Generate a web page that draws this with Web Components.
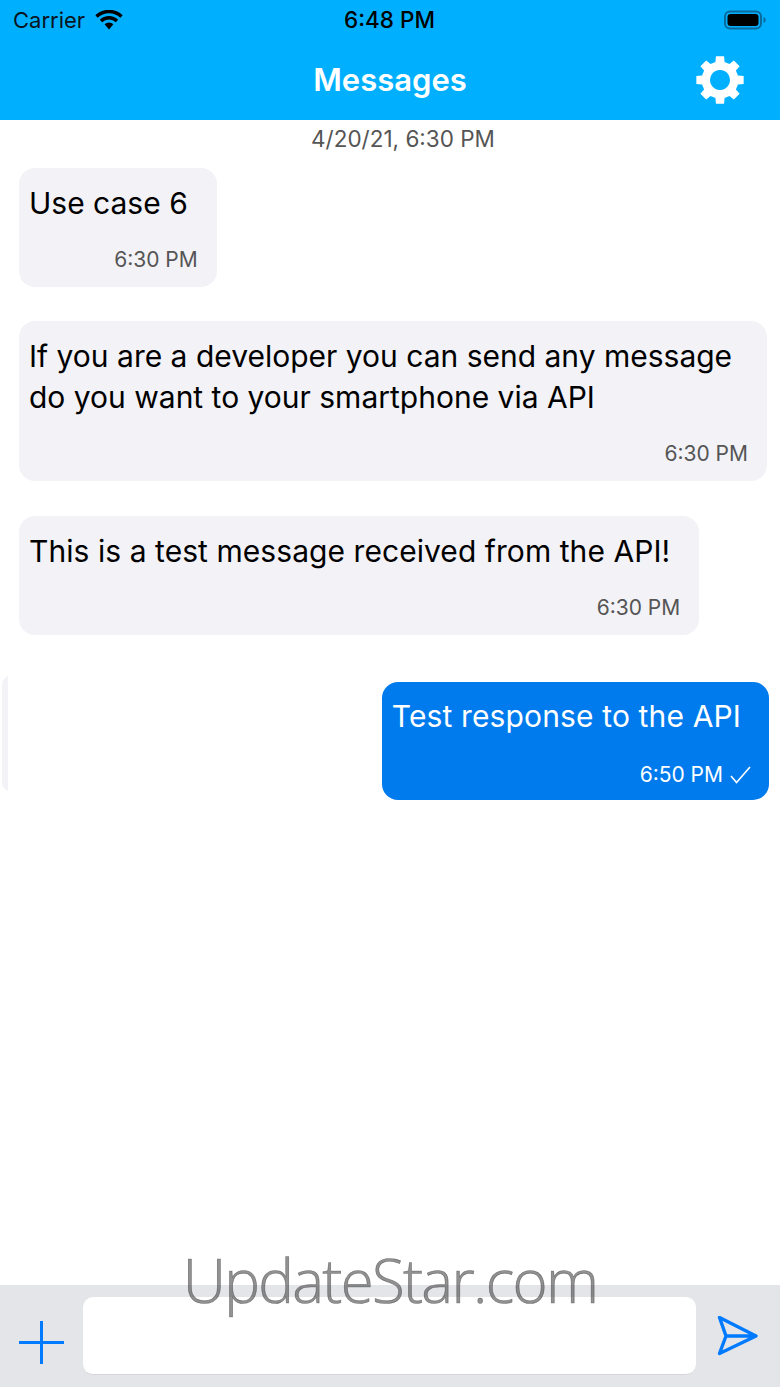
<!DOCTYPE html>
<html>
<head>
<meta charset="utf-8">
<style>
  html, body { margin: 0; padding: 0; }
  body { width: 780px; height: 1387px; overflow: hidden; background: #fff; font-family: Inter, "Liberation Sans", sans-serif; }
</style>
</head>
<body>
<chat-screen>
  <status-bar slot="top"></status-bar>
  <nav-bar slot="top" title="Messages"></nav-bar>
  <date-label>4/20/21, 6:30 PM</date-label>
  <chat-bubble time="6:30 PM" style="margin-top:13px">Use case 6</chat-bubble>
  <chat-bubble time="6:30 PM" style="margin-top:34px">If you are a developer you can send any message do you want to your smartphone via API</chat-bubble>
  <chat-bubble time="6:30 PM" style="margin-top:35px;letter-spacing:.06px">This is a test message received from the API!</chat-bubble>
  <chat-bubble time="6:50 PM" mine style="margin-top:47px;letter-spacing:.14px">Test response to the API</chat-bubble>
  <compose-bar slot="bottom"></compose-bar>
</chat-screen>
<water-mark>UpdateStar.com</water-mark>

<script>
class ChatScreen extends HTMLElement {
  constructor() {
    super();
    this.attachShadow({ mode: 'open' }).innerHTML = `
      <style>
        :host { display: flex; flex-direction: column; width: 780px; height: 1387px; }
        main { flex: 1; position: relative; display: flex; flex-direction: column; align-items: flex-start; min-height: 0; }
        .sliver { position: absolute; left: 2px; top: 555px; width: 10px; height: 117px; background: #f2f2f7; border-radius: 10px 0 0 10px; box-shadow: inset -4px 0 0 #fff; }
      </style>
      <slot name="top"></slot>
      <main><div class="sliver"></div><slot></slot></main>
      <slot name="bottom"></slot>`;
  }
}

class StatusBar extends HTMLElement {
  constructor() {
    super();
    this.attachShadow({ mode: 'open' }).innerHTML = `
      <style>
        :host { display: grid; grid-template-columns: 1fr auto 1fr; align-items: center; height: 40px; background: #00b0ff; color: #0a1420; font-size: 22px; padding: 0 14px 0 13px; }
        .left { display: flex; align-items: center; gap: 10px; }
        .time { font-weight: 500; font-size: 22.500px; color: #000; padding-bottom: 2px; }
        .right { display: flex; justify-content: flex-end; align-items: center; }
        svg { display: block; }
      </style>
      <div class="left">Carrier
        <svg width="28" height="20" viewBox="0 0 28 20">
          <path d="M1.500 6.500A18 18 0 0 1 26.500 6.500M6 11A11.600 11.600 0 0 1 22 11" fill="none" stroke="#000" stroke-width="3.400"/>
          <path d="M9.600 14.200a6.400 6.400 0 0 1 8.800 0L14 19.500z" fill="#000"/>
        </svg>
      </div>
      <div class="time">6:48 PM</div>
      <div class="right">
        <svg width="42" height="20" viewBox="0 0 42 20">
          <rect x="1" y="1.500" width="36" height="17" rx="5" fill="none" stroke="#0a6a9c" stroke-width="2"/>
          <rect x="3.500" y="4" width="31" height="12" rx="3" fill="#000"/>
          <path d="M39.500 7v6c1.400-.4 2.200-1.600 2.200-3s-.8-2.600-2.200-3z" fill="#0a6a9c"/>
        </svg>
      </div>`;
  }
}

class NavBar extends HTMLElement {
  constructor() {
    super();
    this.attachShadow({ mode: 'open' }).innerHTML = `
      <style>
        :host { display: flex; position: relative; align-items: center; justify-content: center; box-sizing: border-box; height: 80px; padding-bottom: 2px; background: #00b0ff; color: #fff; font-size: 31px; font-weight: 600; }
        svg { position: absolute; right: 36px; top: 16px; }
      </style>
      <span>${this.getAttribute('title')}</span>
      <svg width="48" height="48" viewBox="0 0 48 48"><path fill="#fff" fill-rule="evenodd" d="${NavBar.gear()}"/></svg>`;
  }
  static gear() {
    // eight toothed cog with a round hole
    const c = 24, outer = 24, inner = 18.5, pts = [];
    for (let i = 0; i < 8; i++) {
      const a = i * Math.PI / 4 - Math.PI / 2;
      for (const [r, d] of [[inner, -0.25], [outer, -0.17], [outer, 0.17], [inner, 0.25]]) {
        pts.push((c + r * Math.cos(a + d)).toFixed(2) + ' ' + (c + r * Math.sin(a + d)).toFixed(2));
      }
    }
    return 'M' + pts.join('L') + 'Z M24 14a10 10 0 1 0 .01 0Z';
  }
}

class DateLabel extends HTMLElement {
  constructor() {
    super();
    this.attachShadow({ mode: 'open' }).innerHTML = `
      <style>
        :host { display: block; width: 100%; box-sizing: border-box; padding-left: 26px; text-align: center; color: #555; font-size: 22.500px; line-height: 32px; height: 32px; margin-top: 3px; }
      </style>
      <slot></slot>`;
  }
}

class ChatBubble extends HTMLElement {
  constructor() {
    super();
    const mine = this.hasAttribute('mine');
    this.attachShadow({ mode: 'open' }).innerHTML = `
      <style>
        :host { display: block; box-sizing: border-box; max-width: 748px; margin-left: 19px; padding: 15px 29px 13px 10px; border-radius: 16px; background: #f2f2f7; color: #000; font-size: 30px; line-height: 41px; }
        :host([mine]) { align-self: flex-end; margin: 0 11px 0 0; padding: 14px 28px 11px 10px; background: #007bed; color: #fff; }
        .meta { display: flex; justify-content: flex-end; align-items: center; gap: 7px; margin: 22px -10px 0 0; font-size: 21px; line-height: 28px; letter-spacing: 0; color: #555; }
        :host([mine]) .meta { color: #fff; margin-top: 24px; }
        svg { display: block; }
      </style>
      <slot></slot>
      <div class="meta"><span>${this.getAttribute('time')}</span>${mine ? `
        <svg width="21" height="18" viewBox="0 0 21 18"><path d="M1 10l5.500 6.500L20 1" fill="none" stroke="#fff" stroke-width="1.600"/></svg>` : ''}</div>`;
  }
}

class ComposeBar extends HTMLElement {
  constructor() {
    super();
    this.attachShadow({ mode: 'open' }).innerHTML = `
      <style>
        :host { display: flex; align-items: flex-start; height: 102px; background: #e4e5e9; box-sizing: border-box; padding-top: 12px; }
        .plus { margin: 23px 19px 0 19px; display: block; }
        .field { width: 613px; height: 78px; background: #fff; border-radius: 10px; box-sizing: border-box; border-bottom: 1px solid #d6d6da; }
        .send { margin: 19px 0 0 20px; display: block; }
      </style>
      <svg class="plus" width="45" height="45" viewBox="0 0 45 45"><path d="M22.500 1v43M0 22.500h45" stroke="#007aff" stroke-width="3" fill="none"/></svg>
      <div class="field"></div>
      <svg class="send" width="44" height="42" viewBox="0 0 44 42"><path d="M3.500 1.500L40 20 3.500 37.500l6.500-17.500zM10 20h30" fill="none" stroke="#007aff" stroke-width="3.400" stroke-linejoin="round" stroke-linecap="round"/></svg>`;
  }
}

class WaterMark extends HTMLElement {
  constructor() {
    super();
    this.attachShadow({ mode: 'open' }).innerHTML = `
      <style>
        :host { position: absolute; left: 0; top: 1246px; width: 780px; text-align: center; font-family: "Open Sans", sans-serif; font-weight: 300; font-size: 60px; line-height: 68px; letter-spacing: -1.700px; color: rgba(60,60,60,.56); -webkit-text-stroke: .7px rgba(60,60,60,.56); }
      </style>
      <slot></slot>`;
  }
}

customElements.define('chat-screen', ChatScreen);
customElements.define('status-bar', StatusBar);
customElements.define('nav-bar', NavBar);
customElements.define('date-label', DateLabel);
customElements.define('chat-bubble', ChatBubble);
customElements.define('compose-bar', ComposeBar);
customElements.define('water-mark', WaterMark);
</script>
</body>
</html>
